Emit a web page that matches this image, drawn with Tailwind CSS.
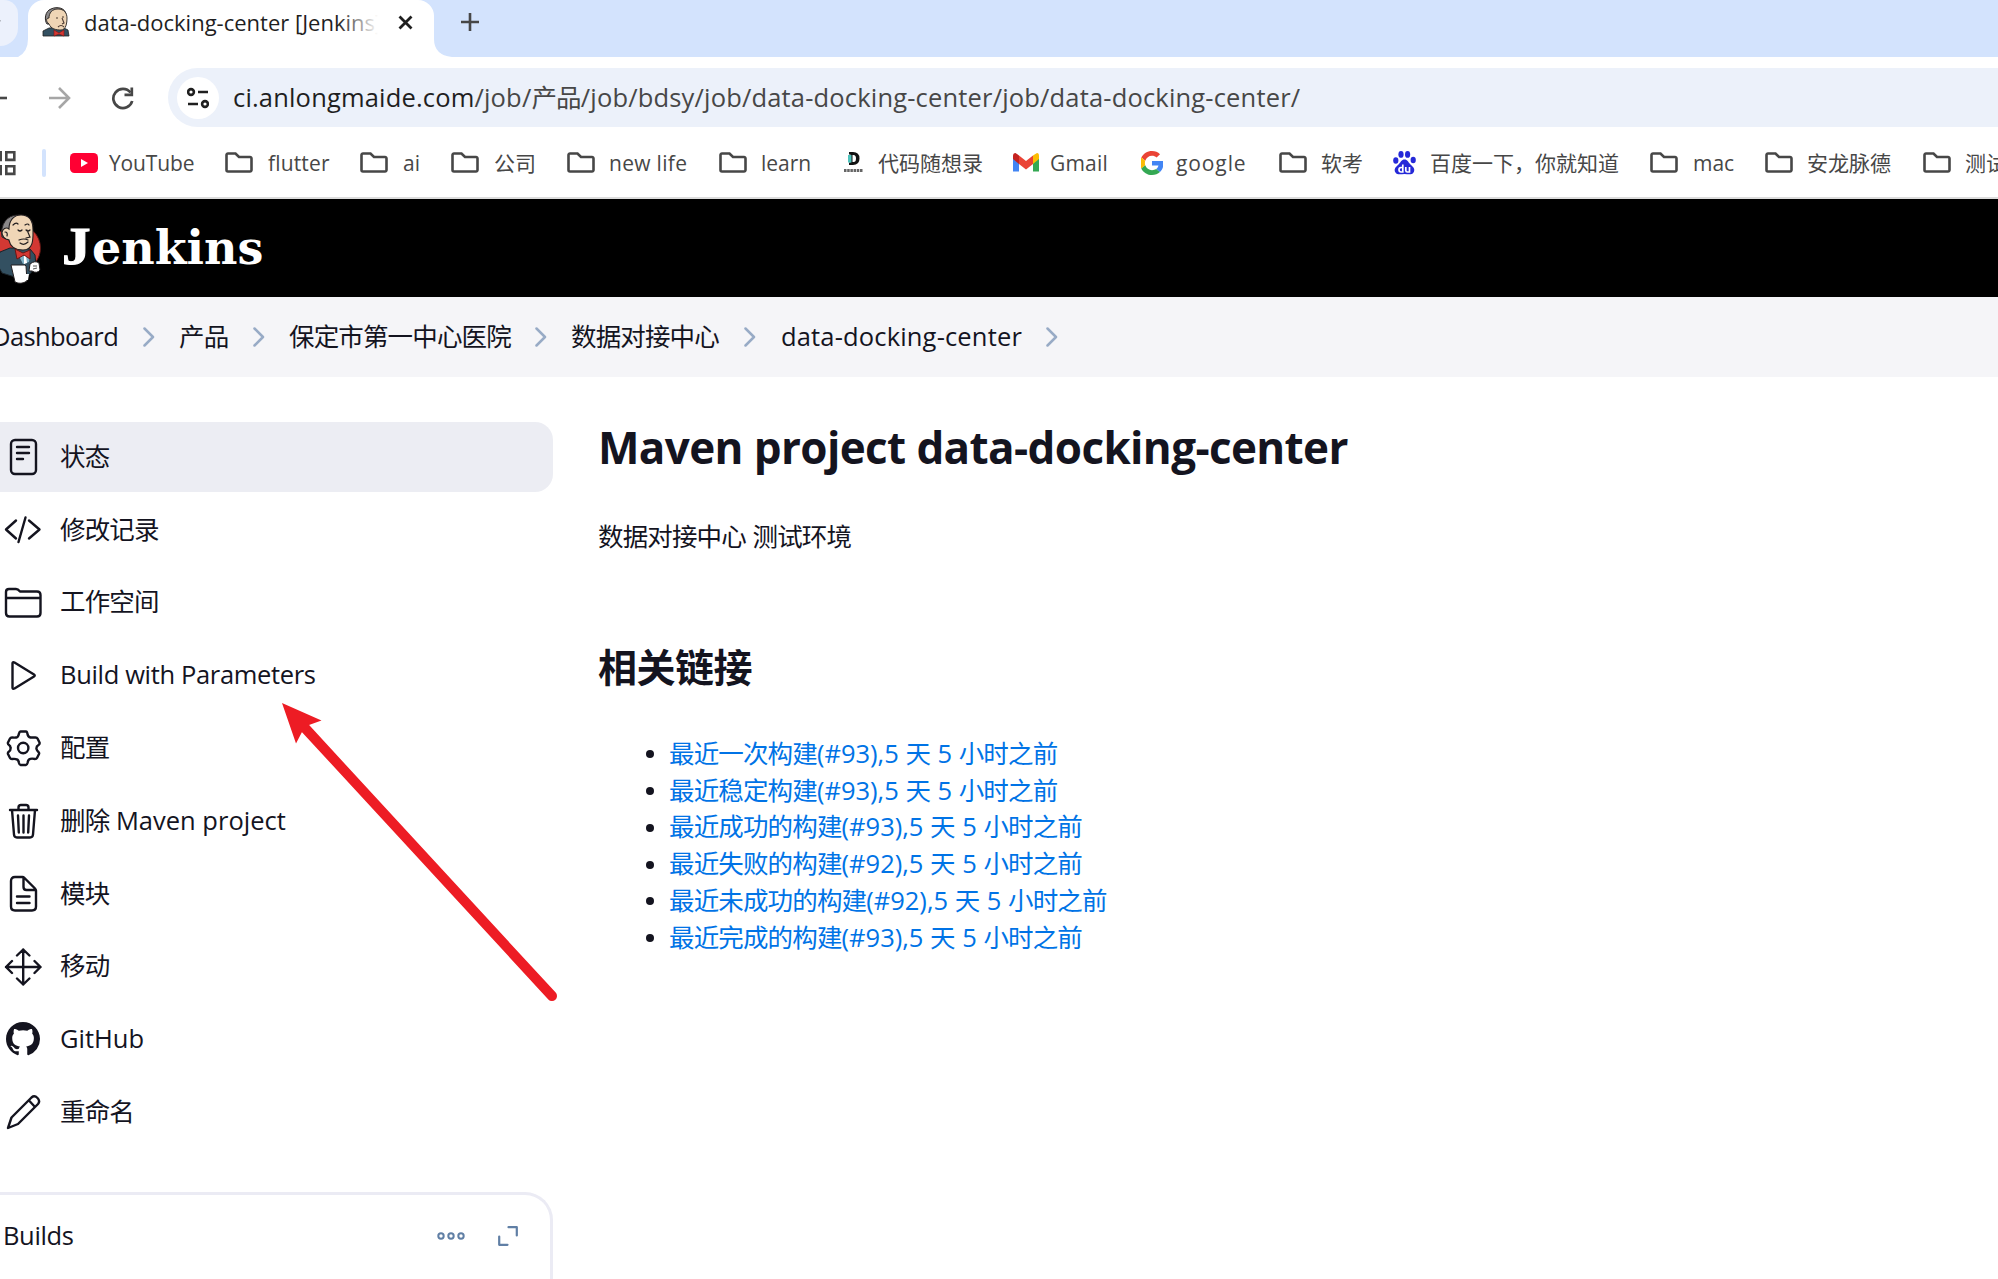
<!DOCTYPE html>
<html lang="zh-CN">
<head>
<meta charset="utf-8">
<title>data-docking-center [Jenkins]</title>
<script src="https://cdn.jsdelivr.net/npm/@tailwindcss/browser@4"></script>
</head>
<body class="relative h-[1279px] w-[1998px] overflow-hidden bg-white font-['Open_Sans','Noto_Sans_CJK_SC',sans-serif] text-[25.5px] text-[#14141f]">

<svg class="hidden">
  <symbol id="folder" viewBox="0 0 28 21"><path d="M3 1.5h7.5l3.5 3.5h11a1.5 1.5 0 0 1 1.5 1.5v11.500a1.500 1.500 0 0 1-1.500 1.500H3A1.500 1.500 0 0 1 1.500 18V3A1.500 1.500 0 0 1 3 1.500z" fill="none" stroke="#474747" stroke-width="2.600"/></symbol>
  <symbol id="chev" viewBox="0 0 12 20"><path d="M1.500 1.500 10 10 1.500 18.500" fill="none" stroke="#98abc6" stroke-width="2.500" stroke-linecap="round" stroke-linejoin="round"/></symbol>
</svg>

<!-- Tab strip -->
<div class="flex h-[57px] bg-[#d3e3fd]">
  <div class="h-[46px] w-[18px] rounded-br-[18px] rounded-tr-[14px] bg-[#ecf1fc]">
    <svg class="h-[46px] w-[18px]" viewBox="0 0 18 46"><path d="M-4 22 0 20" stroke="#333" stroke-width="2.500"/></svg>
  </div>
  <svg class="h-[57px] w-[10px]" viewBox="0 0 10 57"><path d="M10 39v18H0q10-5 10-18z" fill="#fff"/></svg>
  <div class="flex h-[57px] w-[406px] rounded-t-[16px] bg-white pl-[14px]">
    <svg class="mt-[7px] h-[30px] w-[28px] shrink-0" viewBox="0 0 28 30">
      <path d="M1 29v-5l6-3 13-1 6 3 1 6z" fill="#335061" stroke="#222" stroke-width=".8"/>
      <path d="M5 17C2 13 3 4 9 2c6-3 15-1 15 6l-1 4H8l-1 5z" fill="#8a8889" stroke="#2a2624" stroke-width="1"/>
      <path d="M7 11c0-5 3-9 9-9s9 4 9 9-1 12-6 12-10-1-12-6l-1-1c-2-2-2-5 1-5z" fill="#efd5b5" stroke="#2a2624" stroke-width=".9"/>
      <path d="M14 11h2m4-1h2m-2 1 2 5-2 1m-4 3q3-3 6 0" fill="none" stroke="#4d3c33" stroke-width="1.100"/>
      <path d="m12 23 5 3 5-3v6l-5-2-5 2z" fill="#d33833" stroke="#811" stroke-width=".6"/>
    </svg>
    <div class="relative ml-[14px] mt-[6px] h-8 w-[294px] overflow-hidden whitespace-nowrap text-[22px] leading-8 text-[#1f1f1f]">data-docking-center [Jenkins]<div class="absolute right-0 top-0 h-8 w-10 bg-linear-to-r from-white/0 to-white"></div></div>
    <svg class="ml-[20px] mt-[15px] h-[15px] w-[15px]" viewBox="0 0 15 15"><path d="m1.500 1.500 12 12m0-12-12 12" stroke="#1f1f1f" stroke-width="2.800"/></svg>
  </div>
  <svg class="h-[57px] w-[18px]" viewBox="0 0 18 57"><path d="M0 39v18h18Q0 55 0 39z" fill="#fff"/></svg>
  <svg class="ml-[9px] mt-[13px] h-[18px] w-[18px]" viewBox="0 0 18 18"><path d="M9 0v18M0 9h18" stroke="#474747" stroke-width="2.600"/></svg>
</div>

<!-- Address bar -->
<div class="flex h-[81px] items-center">
  <svg class="h-6 w-[8px]" viewBox="0 0 8 24"><path d="M0 12h7" stroke="#474747" stroke-width="2.600"/></svg>
  <svg class="ml-[41px] h-[22px] w-[22px]" viewBox="0 0 22 22"><path d="M0 11h20M10 1l10 10-10 10" fill="none" stroke="#a6a6a6" stroke-width="2.600"/></svg>
  <svg class="ml-[40px] h-[24px] w-[24px]" viewBox="0 0 24 24"><path d="M19.500 6.500A9.600 9.600 0 1 0 21.200 15" fill="none" stroke="#474747" stroke-width="2.700"/><path d="M20.800 1.500v7.300h-7.300" fill="none" stroke="#474747" stroke-width="2.700"/></svg>
  <div class="ml-[33px] flex h-[59px] flex-1 items-center rounded-l-full bg-[#ecf1fa] pl-[9px]">
    <div class="flex h-[42px] w-[42px] items-center justify-center rounded-full bg-white">
      <svg class="h-[22px] w-[22px]" viewBox="0 0 22 22" fill="none" stroke="#1f1f1f" stroke-width="2.600"><circle cx="4" cy="5" r="2.900"/><path d="M11 5h10M1 17h10"/><circle cx="18" cy="17" r="2.900"/></svg>
    </div>
    <div class="ml-[14px] whitespace-nowrap text-[25.500px] tracking-[0.170px] text-[#474747]"><span class="text-[#1f1f1f]">ci.anlongmaide.com</span>/job/<span class="tracking-[-0.800px]">产品</span>/job/bdsy/job/data-docking-center/job/data-docking-center/</div>
  </div>
</div>

<!-- Bookmarks bar -->
<div class="flex h-[61px] border-b-2 border-[#dcdcdc] pb-[8px] text-[21px] text-[#474747] [&_svg]:-mt-0.5">
  <div class="flex w-[42px] items-center"><svg class="h-[26px] w-[17px]" viewBox="0 0 17 26" fill="none" stroke="#474747" stroke-width="2.600"><path d="M-5 2.300h5.700v7.600H-5M-5 16.300h5.700v7.600H-5M6.300 2.300h8v7.600h-8zM6.300 16.300h8v7.600h-8z"/></svg></div>
  <div class="flex w-[28px] items-center"><div class="-mt-[2px] h-[28px] w-[4px] rounded-full bg-[#d3e3fd]"></div></div>
  <div class="flex w-[155px] items-center gap-[11px] whitespace-nowrap tracking-[-0.150px]"><svg class="h-5 w-7" viewBox="0 0 28 20"><rect width="28" height="20" rx="4.500" fill="#ff0033"/><path d="M11 6v8l7-4z" fill="#fff"/></svg>YouTube</div>
  <div class="flex w-[135px] items-center gap-[15px] whitespace-nowrap tracking-[0.150px]"><svg class="h-[21px] w-7"><use href="#folder"/></svg>flutter</div>
  <div class="flex w-[91px] items-center gap-[15px] whitespace-nowrap"><svg class="h-[21px] w-7"><use href="#folder"/></svg>ai</div>
  <div class="flex w-[116px] items-center gap-[15px] whitespace-nowrap"><svg class="h-[21px] w-7"><use href="#folder"/></svg>公司</div>
  <div class="flex w-[152px] items-center gap-[14px] whitespace-nowrap tracking-[0.300px]"><svg class="h-[21px] w-7"><use href="#folder"/></svg>new life</div>
  <div class="flex w-[124px] items-center gap-[14px] whitespace-nowrap"><svg class="h-[21px] w-7"><use href="#folder"/></svg>learn</div>
  <div class="flex w-[170px] items-center gap-[14px] whitespace-nowrap"><svg class="h-6 w-[21px]" viewBox="0 0 21 24"><path d="M6 1h4q6.500 0 6.500 6.500T10 14H6v-2.500h1.500v-8H6z" fill="#111"/><path d="M5 4h3.500v7.500H5z" fill="#4fc3bd"/><path d="M9.500 4h1q2.500 0 2.500 3.500T10.500 11h-1z" fill="#fff"/><path d="M1 19.500h19" stroke="#666" stroke-width="3" stroke-dasharray="2.500 .7"/></svg>代码随想录</div>
  <div class="flex w-[128px] items-center gap-[11px] whitespace-nowrap tracking-[0.200px]"><svg class="h-[26px] w-[26px]" viewBox="0 0 26 26"><path d="M0 6v15.500h6V11z" fill="#4285f4"/><path d="M26 6v15.500h-6V11z" fill="#34a853"/><path d="M20 5.500 24 3q2 0 2 3v3l-6 5z" fill="#fbbc04"/><path d="M6 5.500 2.500 3Q0 3 0 6v3l6 5z" fill="#c5221f"/><path d="m6 5.500 7 5.500 7-5.500V14l-7 5.500L6 14z" fill="#ea4335"/></svg>Gmail</div>
  <div class="flex w-[138px] items-center gap-[13px] whitespace-nowrap tracking-[0.900px]"><svg class="h-[26px] w-[22px]" viewBox="2 0 44 48"><path fill="#EA4335" d="M24 9.500c3.540 0 6.710 1.220 9.210 3.600l6.850-6.850C35.900 2.380 30.470 0 24 0 14.620 0 6.510 5.380 2.560 13.220l7.980 6.190C12.430 13.720 17.740 9.500 24 9.500z"/><path fill="#4285F4" d="M46.980 24.550c0-1.570-.15-3.090-.38-4.550H24v9.020h12.940c-.58 2.960-2.260 5.480-4.780 7.180l7.730 6c4.510-4.180 7.090-10.360 7.090-17.650z"/><path fill="#FBBC05" d="M10.530 28.590c-.48-1.450-.76-2.990-.76-4.590s.27-3.140.76-4.590l-7.980-6.190C.92 16.460 0 20.120 0 24c0 3.880.92 7.540 2.560 10.780l7.970-6.190z"/><path fill="#34A853" d="M24 48c6.480 0 11.930-2.130 15.890-5.810l-7.730-6c-2.150 1.450-4.920 2.300-8.160 2.300-6.260 0-11.570-4.220-13.470-9.910l-7.980 6.190C6.510 42.620 14.620 48 24 48z"/></svg>google</div>
  <div class="flex w-[114px] items-center gap-[14px] whitespace-nowrap"><svg class="h-[21px] w-7"><use href="#folder"/></svg>软考</div>
  <div class="flex w-[257px] items-center gap-[14px] whitespace-nowrap"><svg class="h-6 w-[23px]" viewBox="0 0 23 24"><g fill="#2529d8"><ellipse cx="2.800" cy="9.500" rx="2.600" ry="3.200"/><ellipse cx="8" cy="3.400" rx="2.600" ry="3.400"/><ellipse cx="14.600" cy="3.400" rx="2.600" ry="3.400"/><ellipse cx="20.200" cy="9" rx="2.600" ry="3.300"/><path d="M11.500 8.500c3 0 3.500 2.600 6 5 3 2.500 5 5 3 8-1.500 2.500-5 1.700-9 1.500-4 .2-7.500 1-9-1.500-2-3 0-5.500 3-8 2.500-2.400 3-5 6-5z"/></g><path d="M9.800 13.500v7.500H8q-2 0-2-2.200T8 16.500h1.800M12.800 16v3.500q0 1.500 1.500 1.500h2.200v-5" fill="none" stroke="#fff" stroke-width="1.700"/></svg>百度一下，你就知道</div>
  <div class="flex w-[115px] items-center gap-[15px] whitespace-nowrap"><svg class="h-[21px] w-7"><use href="#folder"/></svg>mac</div>
  <div class="flex w-[158px] items-center gap-[14px] whitespace-nowrap"><svg class="h-[21px] w-7"><use href="#folder"/></svg>安龙脉德</div>
  <div class="flex w-[75px] items-center gap-[14px] overflow-hidden whitespace-nowrap"><svg class="h-[21px] w-7 shrink-0"><use href="#folder"/></svg>测试</div>
</div>

<!-- Jenkins header -->
<header class="flex h-[98px] items-center bg-black">
  <svg class="h-[72px] w-[42px]" viewBox="0 0 42 72">
    <circle cx="17" cy="36" r="23.500" fill="#d33833" stroke="#5a1512" stroke-width="1"/>
    <path d="M0 40 10 36l20 1 5 6 1 11-6 8-12 4L2 61-4 50z" fill="#335061" stroke="#1a2228" stroke-width="1"/>
    <path d="M2 25C0 12 7 3 18 3s14 5 15 11L16 14 9 28z" fill="#8a8889" stroke="#231f20" stroke-width="1"/>
    <path d="M9 17C9 8 14 3 21 3c9 0 12 7 12 15s1 20-10 20c-8 0-13-4-14-10l-3-1c-4-2-5-7-3-9 2-3 5-2 6-1z" fill="#f0d6b7" stroke="#231f20" stroke-width="1.100"/>
    <path d="M13 13q3-3 5-1M25 13q3-2 4 0M18 18q2 2 4 0M26 18q2 2 4 0M27 18l3 7-4 1M19 28q5-2 9 0M20 31q4 3 8-1M5 20q3 0 2 4" fill="none" stroke="#231f20" stroke-width="1.200" stroke-linecap="round"/>
    <path d="m18 42 7 2 5-2-1 8-6 2z" fill="#81b0c4"/><path d="m24 43 2 1 1 7-3 1z" fill="#fff"/>
    <path d="m15 37 8 4 7-3v9l-6-4-7 4z" fill="#d33833" stroke="#6d1512" stroke-width="1"/>
    <path d="M11 53h14l1 1 1 15q-6 4-12 1z" fill="#fff" stroke="#231f20" stroke-width="1"/><path d="M26 62h3l-1 6h-2z" fill="#fff"/>
    <path d="M30 52q5-4 9-1l1 7q-3 4-8 1h-3z" fill="#fff" stroke="#231f20" stroke-width="1"/>
    <path d="m33 54 4 0m-4 3 4-1" stroke="#555"/>
  </svg>
  <div class="ml-[20px] mt-[-2px] flex items-baseline font-['DejaVu_Serif',serif] text-[46px] font-bold leading-[60px] text-white"><span class="w-[30px] origin-left scale-x-110 font-['Liberation_Serif',serif] text-[52px] [-webkit-text-stroke:1px_white]">J</span><span>enkins</span></div>
</header>

<!-- Breadcrumbs -->
<nav class="flex h-[80px] items-center whitespace-nowrap bg-[#f5f5f8] [&>div]:-mt-0.5">
  <div class="flex w-[143px] justify-start tracking-[-0.600px]"><span class="-ml-[8px]">Dashboard</span></div>
  <svg class="h-5 w-3"><use href="#chev"/></svg>
  <div class="ml-[24px] w-[74px] tracking-[-0.850px]">产品</div>
  <svg class="h-5 w-3"><use href="#chev"/></svg>
  <div class="ml-[24px] w-[246px] tracking-[-0.850px]">保定市第一中心医院</div>
  <svg class="h-5 w-3"><use href="#chev"/></svg>
  <div class="ml-[24px] w-[173px] tracking-[-0.850px]">数据对接中心</div>
  <svg class="h-5 w-3"><use href="#chev"/></svg>
  <div class="ml-[25px] w-[265px] tracking-[0.160px]">data-docking-center</div>
  <svg class="h-5 w-3"><use href="#chev"/></svg>
</nav>

<div class="flex h-[902px]">
  <!-- Sidebar -->
  <aside class="flex w-[553px] flex-col pt-[45px]">
    <div class="flex flex-col gap-[2.800px] whitespace-nowrap [&>div>span]:-mt-0.5">
      <div class="flex h-[70px] items-center gap-[18px] rounded-r-[18px] bg-[#ecedf3] pl-[4px]">
        <svg class="h-[38px] w-[38px]" viewBox="0 0 38 38" fill="none" stroke="#14141f" stroke-width="2.400" stroke-linecap="round"><rect x="7" y="2" width="25" height="34" rx="4"/><path d="M13 9h12M13 15h12M13 21h6"/></svg><span class="tracking-[-0.850px]">状态</span></div>
      <div class="flex h-[70px] items-center gap-[18px] pl-[4px]">
        <svg class="h-[38px] w-[38px]" viewBox="0 0 38 38" fill="none" stroke="#14141f" stroke-width="2.400" stroke-linecap="round" stroke-linejoin="round"><path d="m12 9.500-10 9 10 9M25 9.500l10.500 9-10.500 9M21.500 6.500l-7 24.500"/></svg><span class="tracking-[-0.850px]">修改记录</span></div>
      <div class="flex h-[70px] items-center gap-[18px] pl-[4px]">
        <svg class="h-[38px] w-[38px]" viewBox="0 0 38 38" fill="none" stroke="#14141f" stroke-width="2.400" stroke-linejoin="round"><path d="M2 14V8q0-3 3-3h7q2 0 4 2.500h17q3.500 0 3.500 3.500v18q0 3.500-3.500 3.500H5.500Q2 32.500 2 29zM2 14h34.500"/></svg><span class="tracking-[-0.850px]">工作空间</span></div>
      <div class="flex h-[70px] items-center gap-[18px] pl-[4px]">
        <svg class="h-[38px] w-[38px]" viewBox="0 0 38 38" fill="none" stroke="#14141f" stroke-width="2.400" stroke-linejoin="round"><path d="M8.500 7.500v24q0 2 2 1l19.500-12q1.500-1 0-2L10.500 6.500q-2-1-2 1z"/></svg><span class="tracking-[-0.340px]">Build with Parameters</span></div>
      <div class="flex h-[70px] items-center gap-[18px] pl-[4px]">
        <svg class="h-[38px] w-[38px]" viewBox="0 0 38 38" fill="none" stroke="#14141f" stroke-width="2.400" stroke-linejoin="round"><path d="M16.500 2.500h5.500q1 0 1.500 2.500 .5 3 3 3.500h5q1.500 0 2 1l2 4q.5 1.500-1 2.500-2.500 1.500-2 4 .3 1.500 2 3 1 1 .5 2l-2 4q-.5 1-2 1-4-1-6 .5-1 .8-1.500 3.500-.5 2-1.500 2h-5.500q-1 0-1.500-2-.5-3-2-3.500-1.500-1-5-.5-1.500 0-2-1l-2-4q-.5-1.500 1-2.500 2-1.500 1.500-4 0-1.500-1.500-2.500-1.500-1-1-2.500l2-4q.5-1 2-1 4 .5 5.500-.5 1-1 1.500-3.500.5-2 1.500-2z"/><circle cx="19.200" cy="19" r="5.200"/></svg><span class="tracking-[-0.850px]">配置</span></div>
      <div class="flex h-[70px] items-center gap-[18px] pl-[4px]">
        <svg class="h-[38px] w-[38px]" viewBox="0 0 38 38" fill="none" stroke="#14141f" stroke-width="2.400" stroke-linecap="round" stroke-linejoin="round"><path d="M6 8h27M8 8l2 24.500q.2 3 3 3h13q2.800 0 3-3L31 8M14.500 8V5.500q0-2.500 2.500-2.500h5q2.500 0 2.500 2.500V8M14 13.500l.8 17M19.500 13.500v17M25 13.500l-.8 17"/></svg><span><span class="tracking-[-0.850px]">删除</span> Maven project</span></div>
      <div class="flex h-[70px] items-center gap-[18px] pl-[4px]">
        <svg class="h-[38px] w-[38px]" viewBox="0 0 38 38" fill="none" stroke="#14141f" stroke-width="2.400" stroke-linecap="round" stroke-linejoin="round"><path d="M18.500 2H11Q7 2 7 6v25.500q0 4 4 4h17q4 0 4-4V15.500q0-1-1-2L20.500 3q-1-1-2-1zM19.500 3v9q0 3 3 3h9M13 21.500h12.500M13 28h12.500"/></svg><span class="tracking-[-0.850px]">模块</span></div>
      <div class="flex h-[70px] items-center gap-[18px] pl-[4px]">
        <svg class="h-[38px] w-[38px]" viewBox="0 0 38 38" fill="none" stroke="#14141f" stroke-width="2.400" stroke-linecap="round" stroke-linejoin="round"><path d="M19.200 1.500v35M2 19h34.500M13 7.500l6.200-6 6.200 6M13 30.500l6.200 6 6.200-6M8 13l-6 6 6 6M30.500 13l6 6-6 6"/></svg><span class="tracking-[-0.850px]">移动</span></div>
      <div class="flex h-[70px] items-center gap-[18px] pl-[4px]">
        <svg class="h-[38px] w-[38px] p-[2px]" viewBox="0 0 16 16"><path fill="#14141f" d="M8 0C3.580 0 0 3.580 0 8c0 3.540 2.290 6.530 5.470 7.590.4.070.55-.17.55-.38 0-.19-.01-.82-.01-1.490-2.010.37-2.530-.49-2.690-.94-.09-.23-.48-.94-.82-1.130-.28-.15-.68-.52-.01-.53.63-.01 1.080.58 1.230.82.720 1.210 1.870.87 2.330.66.070-.52.280-.87.510-1.070-1.780-.2-3.640-.89-3.640-3.950 0-.87.310-1.590.82-2.150-.08-.2-.36-1.020.08-2.120 0 0 .67-.21 2.200.82.640-.18 1.320-.27 2-.27s1.360.09 2 .27c1.530-1.040 2.200-.82 2.200-.82.440 1.100.160 1.920.08 2.120.510.56.82 1.270.82 2.150 0 3.070-1.870 3.750-3.650 3.950.290.25.540.73.540 1.480 0 1.070-.01 1.930-.01 2.200 0 .21.150.46.550.38A8.010 8.010 0 0 0 16 8c0-4.420-3.580-8-8-8z"/></svg><span>GitHub</span></div>
      <div class="flex h-[70px] items-center gap-[18px] pl-[4px]">
        <svg class="h-[38px] w-[38px]" viewBox="0 0 38 38" fill="none" stroke="#14141f" stroke-width="2.400" stroke-linejoin="round"><path d="M4 35 7.500 24.500 27.500 4.500q3-2.500 6 .5t.5 6L14 31zM25 7.500l6 6.500"/></svg><span class="tracking-[-0.850px]">重命名</span></div>
    </div>
    <div class="mt-[45px] h-[100px] rounded-tr-[28px] border-r-[3px] border-t-[3px] border-[#ebebf4] pl-[3px]">
      <div class="flex h-[82px] items-center">
        <div class="-mt-[3px] w-[434px] tracking-[-0.350px]">Builds</div>
        <svg class="h-[10px] w-[28px]" viewBox="0 0 28 10" fill="none" stroke="#607fa5" stroke-width="2"><circle cx="4" cy="5" r="2.700"/><circle cx="14" cy="5" r="2.700"/><circle cx="24" cy="5" r="2.700"/></svg>
        <svg class="ml-[33px] h-[20px] w-[20px]" viewBox="0 0 20 20" fill="none" stroke="#607fa5" stroke-width="2.200" stroke-linecap="round" stroke-linejoin="round"><path d="M10.500 1.200h8.300v8.300M1.200 10.500v8.300h8.300"/></svg>
      </div>
    </div>
  </aside>

  <!-- Project details -->
  <main class="whitespace-nowrap pl-[45px] pt-[40px]">
    <h1 class="h-[60px] text-[44px] font-bold leading-[60px] tracking-[-0.620px]">Maven project data-docking-center</h1>
    <p class="mt-[41px] h-[36px] leading-[36px]"><span class="tracking-[-0.850px]">数据对接中心</span> <span class="tracking-[-0.850px]">测试环境</span></p>
    <h2 class="mt-[83px] h-[60px] text-[39px] font-bold leading-[60px] tracking-[-0.500px]">相关链接</h2>
    <ul class="mt-[39px] list-none text-[#0073e6] [&_a]:-mt-[3px]">
      <li class="flex h-[36.750px] items-center pl-[48px]"><i class="mr-[15px] size-[8px] rounded-full bg-[#14141f]"></i><a><span class="tracking-[-0.850px]">最近一次构建</span>(#93),5 天 5 <span class="tracking-[-0.850px]">小时之前</span></a></li>
      <li class="flex h-[36.750px] items-center pl-[48px]"><i class="mr-[15px] size-[8px] rounded-full bg-[#14141f]"></i><a><span class="tracking-[-0.850px]">最近稳定构建</span>(#93),5 天 5 <span class="tracking-[-0.850px]">小时之前</span></a></li>
      <li class="flex h-[36.750px] items-center pl-[48px]"><i class="mr-[15px] size-[8px] rounded-full bg-[#14141f]"></i><a><span class="tracking-[-0.850px]">最近成功的构建</span>(#93),5 天 5 <span class="tracking-[-0.850px]">小时之前</span></a></li>
      <li class="flex h-[36.750px] items-center pl-[48px]"><i class="mr-[15px] size-[8px] rounded-full bg-[#14141f]"></i><a><span class="tracking-[-0.850px]">最近失败的构建</span>(#92),5 天 5 <span class="tracking-[-0.850px]">小时之前</span></a></li>
      <li class="flex h-[36.750px] items-center pl-[48px]"><i class="mr-[15px] size-[8px] rounded-full bg-[#14141f]"></i><a><span class="tracking-[-0.850px]">最近未成功的构建</span>(#92),5 天 5 <span class="tracking-[-0.850px]">小时之前</span></a></li>
      <li class="flex h-[36.750px] items-center pl-[48px]"><i class="mr-[15px] size-[8px] rounded-full bg-[#14141f]"></i><a><span class="tracking-[-0.850px]">最近完成的构建</span>(#93),5 天 5 <span class="tracking-[-0.850px]">小时之前</span></a></li>
    </ul>
  </main>
</div>

<!-- Pointer arrow laid over the sidebar -->
<svg class="absolute left-[270px] top-[690px] h-[320px] w-[300px]" viewBox="270 690 300 320"><path d="M305 728 552 996" stroke="#ed1c24" stroke-width="10" stroke-linecap="round"/><path d="M282 703 321.500 720.500 309 725 302 732 296 743.500z" fill="#ed1c24"/></svg>
</body>
</html>
